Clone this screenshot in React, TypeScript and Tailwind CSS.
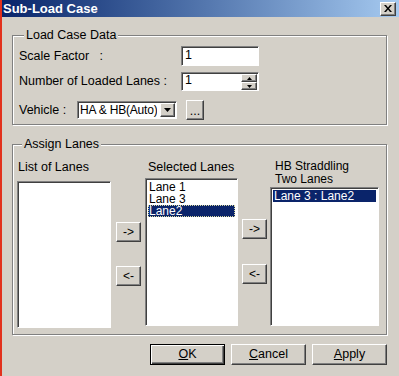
const raised =
  "border border-t-white border-l-white border-r-[#404040] border-b-[#404040] shadow-[inset_-1px_-1px_0_#808080]";
const sunken =
  "border border-t-[#808080] border-l-[#808080] border-r-white border-b-white shadow-[inset_1px_1px_0_#404040]";
const etched =
  "border border-[#808080] shadow-[inset_1px_1px_0_#ffffff,1px_1px_0_#ffffff]";

const ArrowButton = ({ text, className }: { text: string; className?: string }) => (
  <button className={`${raised} bg-[#d4d0c8] w-[25px] h-[20px] flex items-center justify-center text-[12px] ${className ?? ""}`}>
    {text}
  </button>
);

const ListItem = ({ text, selected, focus }: { text: string; selected?: boolean; focus?: boolean }) => (
  <div
    className={`h-[12px] leading-[12px] text-[12px] pl-[1px] whitespace-pre ${
      selected ? "bg-[#0a246a] text-white" : ""
    } ${focus ? "outline outline-1 outline-dotted outline-[#d8d8a0] -outline-offset-1" : ""}`}
  >
    {text}
  </div>
);

const App = () => {
  return (
    <div className="w-[399px] h-[376px] bg-[#d4d0c8] border-l-2 border-[#e2311d] font-['Liberation_Sans',Arial,sans-serif] text-[12.5px] text-black overflow-hidden">
      <div className="h-[17px] flex items-center justify-between bg-gradient-to-r from-[#0a246a] to-[#a6caf0] pl-[1px] pr-[3px]">
        <span className="text-white font-bold text-[13px] leading-[17px]">Sub-Load Case</span>
        <button className={`${raised} bg-[#d4d0c8] w-[16px] h-[14px] flex items-center justify-center`}>
          <svg width="8" height="7" viewBox="0 0 8 7">
            <path d="M0 0h2l2 2.5L6 0h2L5 3.5 8 7H6L4 4.5 2 7H0l3-3.5z" fill="#000" />
          </svg>
        </button>
      </div>

      <fieldset className={`${etched} ml-[10px] mt-[11px] w-[375px] pl-[6px] pb-[4px]`}>
        <legend className="ml-[5px] px-[2px] leading-[14px] bg-[#d4d0c8]">Load Case Data</legend>
        <div className="pt-[4px] flex flex-col">
          <div className="flex items-center h-[20px]">
            <span className="w-[162px] whitespace-pre">Scale Factor   :</span>
            <div className={`${sunken} bg-white w-[78px] h-[20px] pl-[3px] leading-[16px]`}>1</div>
          </div>
          <div className="flex items-center h-[19px] mt-[6px]">
            <span className="w-[162px] whitespace-pre">Number of Loaded Lanes :</span>
            <div className={`${sunken} bg-white w-[78px] h-[19px] pl-[3px] leading-[15px] flex justify-between`}>
              <span>1</span>
              <div className="flex flex-col mr-[1px] mt-[1px]">
                <div className={`${raised} bg-[#d4d0c8] w-[16px] h-[8px] flex items-center justify-center`}>
                  <svg width="5" height="3" viewBox="0 0 5 3"><path d="M2.5 0L5 3H0z" fill="#000" /></svg>
                </div>
                <div className={`${raised} bg-[#d4d0c8] w-[16px] h-[8px] flex items-center justify-center`}>
                  <svg width="5" height="3" viewBox="0 0 5 3"><path d="M0 0h5L2.5 3z" fill="#000" /></svg>
                </div>
              </div>
            </div>
          </div>
          <div className="flex items-center h-[20px] mt-[9px]">
            <span className="w-[58px] whitespace-pre">Vehicle :</span>
            <div className={`${sunken} bg-white w-[100px] h-[18px] flex items-center justify-between pl-[2px] pr-[1px]`}>
              <span className="leading-[14px] text-[12px] tracking-[-0.2px] whitespace-nowrap overflow-hidden">HA &amp; HB(Auto)</span>
              <div className={`${raised} bg-[#d4d0c8] w-[15px] h-[14px] shrink-0 flex items-center justify-center`}>
                <svg width="7" height="4" viewBox="0 0 7 4"><path d="M0 0h7L3.5 4z" fill="#000" /></svg>
              </div>
            </div>
            <button className={`${raised} bg-[#d4d0c8] ml-[9px] w-[18px] h-[20px] flex items-end justify-center pb-[3px] leading-[10px]`}>
              ...
            </button>
          </div>
        </div>
      </fieldset>

      <fieldset className={`${etched} ml-[10px] mt-[12px] w-[375px] pl-[4px] pb-[6px]`}>
        <legend className="ml-[5px] px-[2px] leading-[14px] bg-[#d4d0c8]">Assign Lanes</legend>
        <div className="pt-[9px] flex items-start">
          <div className="w-[94px] flex flex-col">
            <span className="pl-[1px] leading-[14px]">List of Lanes</span>
            <div className={`${sunken} bg-white mt-[7px] h-[147px]`} />
          </div>
          <div className="ml-[5px] flex flex-col pt-[62px]">
            <ArrowButton text="->" />
            <ArrowButton text="<-" className="mt-[24px]" />
          </div>
          <div className="ml-[4px] w-[93px] flex flex-col">
            <span className="pl-[3px] leading-[14px]">Selected Lanes</span>
            <div className={`${sunken} bg-white mt-[4px] h-[148px] p-[2px]`}>
              <ListItem text="Lane 1" />
              <ListItem text="Lane 3" />
              <ListItem text="Lane2" selected focus />
            </div>
          </div>
          <div className="ml-[4px] flex flex-col pt-[59px]">
            <ArrowButton text="->" />
            <ArrowButton text="<-" className="mt-[25px]" />
          </div>
          <div className="ml-[3px] w-[109px] flex flex-col">
            <span className="pl-[5px] leading-[13px] text-[12px]">
              HB Straddling
              <br />
              Two Lanes
            </span>
            <div className={`${sunken} bg-white mt-[1px] h-[139px] p-[2px]`}>
              <ListItem text="Lane 3 : Lane2" selected />
            </div>
          </div>
        </div>
      </fieldset>

      <div className="ml-[10px] w-[375px] mt-[9px] flex justify-end gap-[6px]">
        <button className="w-[75px] h-[21px] bg-[#d4d0c8] border border-black shadow-[inset_1px_1px_0_#fff,inset_-1px_-1px_0_#404040,inset_-2px_-2px_0_#808080]">
          <span className="underline">O</span>K
        </button>
        <button className={`${raised} w-[75px] h-[21px] bg-[#d4d0c8]`}>
          <span className="underline">C</span>ancel
        </button>
        <button className={`${raised} w-[75px] h-[21px] bg-[#d4d0c8]`}>
          <span className="underline">A</span>pply
        </button>
      </div>
    </div>
  );
};

export default App;
